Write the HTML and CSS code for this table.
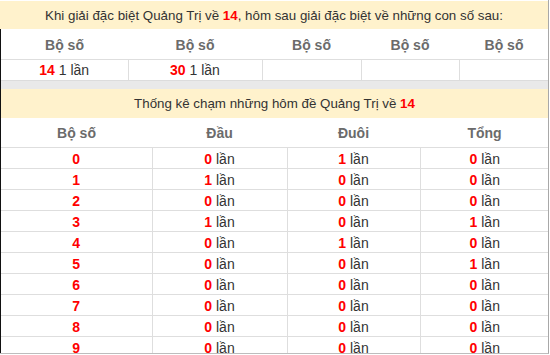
FILE: index.html
```html
<!DOCTYPE html>
<html lang="vi">
<head>
<meta charset="utf-8">
<link rel="stylesheet" href="styles.css">
</head>
<body>
<div class="page">
  <div class="title">Khi giải đặc biệt Quảng Trị về <b class="red">14</b>, hôm sau giải đặc biệt về những con số sau:</div>
  <div class="box">
    <table class="t1">
      <colgroup><col class="c1"><col class="c2"><col class="c3"><col class="c4"><col class="c5"></colgroup>
      <thead>
        <tr><th>Bộ số</th><th>Bộ số</th><th>Bộ số</th><th>Bộ số</th><th>Bộ số</th></tr>
      </thead>
      <tbody>
        <tr><td><b class="red">14</b> 1 lần</td><td><b class="red">30</b> 1 lần</td><td></td><td></td><td></td></tr>
      </tbody>
    </table>
    <div class="sep"></div>
    <div class="title title2">Thống kê chạm những hôm đề Quảng Trị về <b class="red">14</b></div>
    <table class="t2">
      <colgroup><col class="d1"><col class="d2"><col class="d3"><col class="d4"></colgroup>
      <thead>
        <tr><th>Bộ số</th><th>Đầu</th><th>Đuôi</th><th>Tổng</th></tr>
      </thead>
      <tbody>
        <tr><td><b class="red">0</b></td><td><b class="red">0</b> lần</td><td><b class="red">1</b> lần</td><td><b class="red">0</b> lần</td></tr>
        <tr><td><b class="red">1</b></td><td><b class="red">1</b> lần</td><td><b class="red">0</b> lần</td><td><b class="red">0</b> lần</td></tr>
        <tr><td><b class="red">2</b></td><td><b class="red">0</b> lần</td><td><b class="red">0</b> lần</td><td><b class="red">0</b> lần</td></tr>
        <tr><td><b class="red">3</b></td><td><b class="red">1</b> lần</td><td><b class="red">0</b> lần</td><td><b class="red">1</b> lần</td></tr>
        <tr><td><b class="red">4</b></td><td><b class="red">0</b> lần</td><td><b class="red">1</b> lần</td><td><b class="red">0</b> lần</td></tr>
        <tr><td><b class="red">5</b></td><td><b class="red">0</b> lần</td><td><b class="red">0</b> lần</td><td><b class="red">1</b> lần</td></tr>
        <tr><td><b class="red">6</b></td><td><b class="red">0</b> lần</td><td><b class="red">0</b> lần</td><td><b class="red">0</b> lần</td></tr>
        <tr><td><b class="red">7</b></td><td><b class="red">0</b> lần</td><td><b class="red">0</b> lần</td><td><b class="red">0</b> lần</td></tr>
        <tr><td><b class="red">8</b></td><td><b class="red">0</b> lần</td><td><b class="red">0</b> lần</td><td><b class="red">0</b> lần</td></tr>
        <tr><td><b class="red">9</b></td><td><b class="red">0</b> lần</td><td><b class="red">0</b> lần</td><td><b class="red">0</b> lần</td></tr>
      </tbody>
    </table>
  </div>
</div>
</body>
</html>
```
FILE: styles.css
```css
html, body {
  margin: 0;
  padding: 0;
  background: #fff;
}
body {
  font-family: "Liberation Sans", Arial, sans-serif;
  font-size: 14px;
  color: #333;
}
.page {
  width: 549px;
  height: 354px;
  overflow: hidden;
  border-right: 1px solid #a8a8a8;
  border-bottom: 1px solid #bdbdbd;
  padding-top: 1px;
  box-sizing: border-box;
}
.title {
  height: 28px;
  line-height: 29px;
  background: #fff2cc;
  text-align: center;
  color: #333;
  font-size: 13.33px;
  white-space: nowrap;
}
.red {
  color: #ff0000;
  font-weight: bold;
}
.box {
  border-left: 1px solid #111;
}
table {
  width: 548px;
  border-collapse: collapse;
  table-layout: fixed;
}
th {
  font-weight: bold;
  color: #6b6b6b;
  text-align: center;
  padding: 0;
}
td {
  text-align: center;
  padding: 0;
  border-left: 1px solid #dedede;
}
td:first-child {
  border-left: none;
}
.t1 th {
  height: 29px;
  padding-top: 1px;
  border-bottom: 1px solid #dedede;
}
.t1 td {
  height: 20px;
}
.c1 { width: 127px; }
.c2 { width: 134px; }
.c3 { width: 99px; }
.c4 { width: 98px; }
.c5 { width: 90px; }
.sep {
  height: 8px;
  background: #e9e9e9;
  border-top: 1px solid #dcdcdc;
}
.title2 {
  height: 29px;
  line-height: 30px;
}
.t2 th {
  height: 29px;
  border-bottom: 1px solid #dedede;
}
.t2 td {
  height: 21px;
  padding-top: 1px;
  line-height: 18px;
  box-sizing: border-box;
  border-bottom: 1px solid #dedede;
}
.d1 { width: 151px; }
.d2 { width: 135px; }
.d3 { width: 133px; }
.d4 { width: 129px; }
```
